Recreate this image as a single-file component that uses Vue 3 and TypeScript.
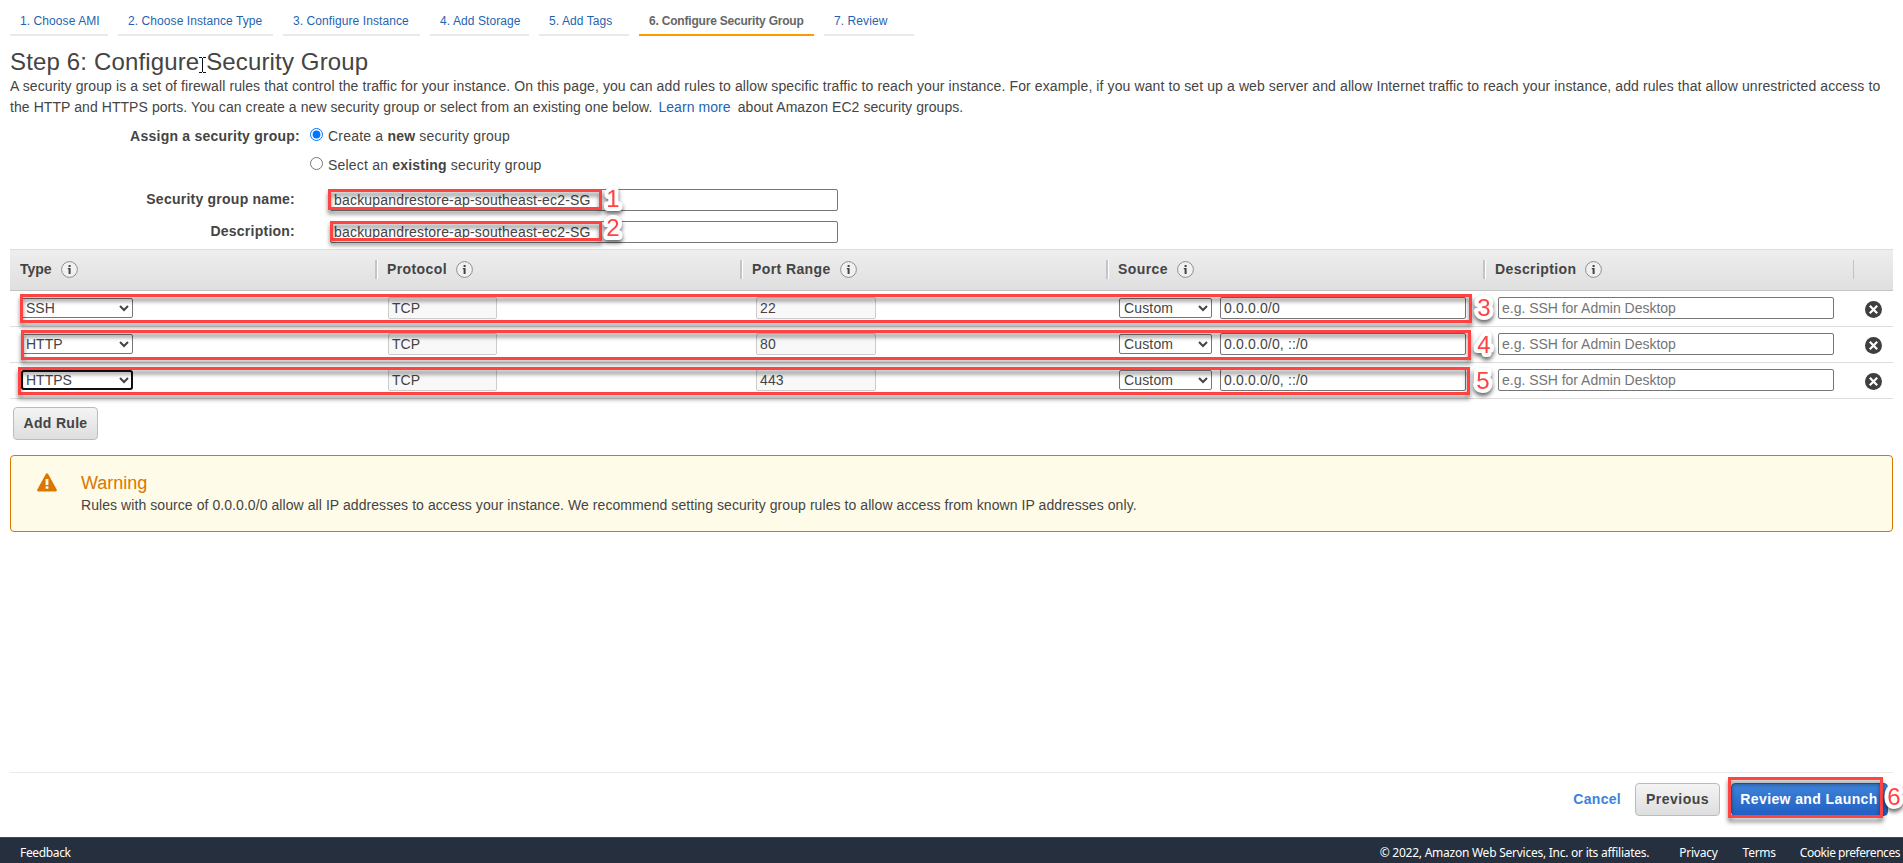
<script setup lang="ts">
import { ref } from 'vue'

interface Tab { label: string; width: number; active?: boolean }
interface Rule { type: string; port: string; source: string; focused?: boolean }
interface Column { label: string; key: string }
interface Mark { n: number; x: number; y: number; w: number; h: number; nx: number; ny: number }

const tabs: Tab[] = [
  { label: '1. Choose AMI', width: 98 },
  { label: '2. Choose Instance Type', width: 155 },
  { label: '3. Configure Instance', width: 137 },
  { label: '4. Add Storage', width: 99 },
  { label: '5. Add Tags', width: 90 },
  { label: '6. Configure Security Group', width: 175, active: true },
  { label: '7. Review', width: 90 },
]

const columns: Column[] = [
  { label: 'Type', key: 'type' },
  { label: 'Protocol', key: 'protocol' },
  { label: 'Port Range', key: 'port' },
  { label: 'Source', key: 'source' },
  { label: 'Description', key: 'desc' },
]

const rules = ref<Rule[]>([
  { type: 'SSH', port: '22', source: '0.0.0.0/0' },
  { type: 'HTTP', port: '80', source: '0.0.0.0/0, ::/0' },
  { type: 'HTTPS', port: '443', source: '0.0.0.0/0, ::/0', focused: true },
])

const groupName = ref('backupandrestore-ap-southeast-ec2-SG')
const description = ref('backupandrestore-ap-southeast-ec2-SG')
const mode = ref('new')

// Numbered callouts laid over the form
const marks: Mark[] = [
  { n: 1, x: 328, y: 189, w: 274, h: 21, nx: 613, ny: 198 },
  { n: 2, x: 330, y: 221, w: 272, h: 20, nx: 613, ny: 227 },
  { n: 3, x: 20, y: 294, w: 1452, h: 29, nx: 1484, ny: 307 },
  { n: 4, x: 21, y: 330, w: 1450, h: 30, nx: 1484, ny: 344 },
  { n: 5, x: 18, y: 367, w: 1452, h: 28, nx: 1483, ny: 380 },
  { n: 6, x: 1728, y: 777, w: 155, h: 41, nx: 1894, ny: 796 },
]
</script>

<template>
  <div class="page">
    <nav class="tabs">
      <a v-for="t in tabs" :key="t.label" class="tab" :class="{ active: t.active }" :style="{ width: t.width + 'px' }">{{ t.label }}</a>
    </nav>

    <main class="content">
      <h1>Step 6: Configure Security Group</h1>
      <p class="intro">
        <span class="line l1">A security group is a set of firewall rules that control the traffic for your instance. On this page, you can add rules to allow specific traffic to reach your instance. For example, if you want to set up a web server and allow Internet traffic to reach your instance, add rules that allow unrestricted access to</span>
        <span class="line l2">the HTTP and HTTPS ports. You can create a new security group or select from an existing one below. <a>Learn more</a> about Amazon EC2 security groups.</span>
      </p>

      <form class="form" @submit.prevent>
        <div class="row assign">
          <b class="label">Assign a security group:</b>
          <input v-model="mode" type="radio" value="new" />
          <span>Create a <b>new</b> security group</span>
        </div>
        <div class="row assign">
          <b class="label"></b>
          <input v-model="mode" type="radio" value="existing" />
          <span>Select an <b>existing</b> security group</span>
        </div>
        <div class="row field">
          <b class="label">Security group name:</b>
          <input v-model="groupName" class="box wide" />
        </div>
        <div class="row field">
          <b class="label">Description:</b>
          <input v-model="description" class="box wide" />
        </div>
      </form>

      <section class="table">
        <div class="grid head">
          <div v-for="c in columns" :key="c.key" class="th" :class="c.key">
            <span>{{ c.label }}</span>
            <svg class="info" viewBox="0 0 17 17">
              <circle cx="8.5" cy="8.5" r="7.9" fill="#f1f1f1" stroke="#8d8d8d" />
              <path d="M7.6 4h2v2h-2zM6.8 7h2.8v6h-2V8.2h-.8z" fill="#444" />
            </svg>
          </div>
          <div class="th last"></div>
        </div>
        <div v-for="r in rules" :key="r.type" class="grid rule">
          <div class="td type">
            <select :class="{ focused: r.focused }"><option>{{ r.type }}</option></select>
          </div>
          <div class="td protocol"><input class="box off" value="TCP" disabled /></div>
          <div class="td port"><input class="box off" :value="r.port" disabled /></div>
          <div class="td source">
            <select><option>Custom</option></select>
            <input v-model="r.source" class="box" />
          </div>
          <div class="td desc"><input class="box" placeholder="e.g. SSH for Admin Desktop" /></div>
          <div class="td remove">
            <svg viewBox="0 0 17 17">
              <circle cx="8.5" cy="8.5" r="8.5" fill="#3f3f3f" />
              <path d="M4.8 4.8l7.4 7.4M12.2 4.8l-7.4 7.4" stroke="#fff" stroke-width="2.2" />
            </svg>
          </div>
        </div>
      </section>

      <button class="btn add">Add Rule</button>

      <section class="warning">
        <svg class="tri" viewBox="0 0 20 19">
          <path d="M9 .8Q10-.4 11 .8L19.7 16.5Q20.3 18.4 18.6 18.5H1.4Q-.3 18.4.3 16.5Z" fill="#d97700" />
          <path d="M8.6 6h2.8v6H8.6zM8.6 13.2h2.8v2.6H8.6z" fill="#fffbe9" />
        </svg>
        <div>
          <h2>Warning</h2>
          <p>Rules with source of 0.0.0.0/0 allow all IP addresses to access your instance. We recommend setting security group rules to allow access from known IP addresses only.</p>
        </div>
      </section>
    </main>

    <div class="actions">
      <a class="cancel">Cancel</a>
      <button class="btn prev">Previous</button>
      <button class="btn primary">Review and Launch</button>
    </div>

    <footer class="footer">
      <span class="feedback">Feedback</span>
      <span class="copy">© 2022, Amazon Web Services, Inc. or its affiliates.</span>
      <span class="privacy">Privacy</span>
      <span class="terms">Terms</span>
      <span class="cookie">Cookie preferences</span>
    </footer>

    <svg class="marks" viewBox="0 0 1903 863">
      <g v-for="m in marks" :key="m.n">
        <rect class="frame" :x="m.x + 1.5" :y="m.y + 1.5" :width="m.w - 3" :height="m.h - 3" />
        <text class="num" :x="m.nx" :y="m.ny + 9">{{ m.n }}</text>
      </g>
      <path class="caret" d="M199 57.5h3M203 57.5h3M199 72.5h3M203 72.5h3M202.5 58v14" />
    </svg>
  </div>
</template>

<style>
body { margin: 0; background: #fff; overflow: hidden; }
</style>

<style scoped>
* { box-sizing: border-box; }
.page {
  position: relative;
  width: 1903px;
  height: 863px;
  overflow: hidden;
  display: flex;
  flex-direction: column;
  font: 14px/21px "Liberation Sans", Arial, sans-serif;
  color: #444;
}
.tabs { display: flex; gap: 10px; padding: 0 10px; height: 36px; flex: none; }
.tab {
  border-bottom: 2px solid #eaeaea;
  padding: 10px 0 0 10px;
  font-size: 12px;
  line-height: 22px;
  color: #1f64b1;
  white-space: nowrap;
  letter-spacing: .08px;
}
.tab.active { border-color: #f90; color: #666; font-weight: bold; letter-spacing: -.2px; }
.content { flex: 1; padding: 0 10px; }
h1 { margin: 11px 0 0; font-size: 24px; line-height: 30px; font-weight: normal; letter-spacing: .15px; }
.intro { margin: -1px 0 0; }
.line { display: block; white-space: nowrap; }
.l1 { letter-spacing: .101px; }
.l2 { letter-spacing: .07px; }
.line a { color: #1f64b1; margin: 0 3px 0 2px; }
.form { letter-spacing: .2px; }
.row { display: flex; }
.assign { height: 29px; padding-top: 8px; line-height: 21px; }
.label { text-align: right; letter-spacing: .24px; }
.assign .label { width: 290px; margin-right: 10px; }
.assign input { width: 13px; height: 13px; margin: 2px 5px 0 0; }
.field { height: 32px; }
.form .field:nth-child(3) { margin-top: 12px; }
.field .label { width: 285px; margin-right: 35px; padding-top: 1px; }
.box {
  height: 22px;
  border: 1px solid #767676;
  border-radius: 2px;
  padding: 0 3px 1px;
  background: #fff;
  color: #444;
  font: 14px "Liberation Sans", Arial, sans-serif;
  letter-spacing: .15px;
}
.box::placeholder { color: #757575; letter-spacing: -.02px; }
.wide { width: 508px; margin-top: 1px; letter-spacing: .19px; }
.off { background: #f8f8f8; border-color: #ccc; }
.table { margin-top: -3px; }
.grid { display: grid; grid-template-columns: 365px 365px 366px 377px 370px 40px; }
.head {
  height: 42px;
  border-top: 1px solid #ddd;
  border-bottom: 1px solid #c4c4c4;
  background: linear-gradient(#eee, #dfdfdf);
}
.th { display: flex; align-items: flex-start; padding: 9px 0 0 10px; font-weight: bold; position: relative; letter-spacing: .4px; line-height: 20px; }
.th.type { letter-spacing: 0; }
.th + .th { padding-left: 12px; }
.th + .th::before { content: ""; position: absolute; left: 0; top: 10px; width: 2px; height: 19px; background: #c4c4c4; border-right: 1px solid #fff; }
.th.last::before { width: 1px; border-right: 0; }
.info { width: 17px; height: 17px; margin: 2px 0 0 9px; }
.rule { height: 36px; border-bottom: 1px solid #ddd; }
.td { display: flex; padding-top: 6px; }
select {
  height: 20px;
  margin: 1px 0 0;
  padding: 0;
  border: 1px solid #767676;
  border-radius: 2px;
  background-color: #fff;
  color: #444;
  font: 14px "Liberation Sans", Arial, sans-serif;
  letter-spacing: .15px;
}
.td.type select { width: 112px; margin-left: 11px; letter-spacing: 0; }
select.focused { outline: 2px solid #101010; outline-offset: -2px; border-radius: 3px; }
.td.protocol .box { width: 109px; margin-left: 13px; padding-left: 3px; letter-spacing: 0; }
.td.port .box { width: 120px; margin-left: 16px; }
.td.source select { width: 93px; margin: 1px 8px 0 13px; }
.td.source .box { width: 246px; }
.td.desc .box { width: 336px; margin-left: 15px; }
.td.remove svg { width: 17px; height: 17px; margin: 4px 0 0 12px; }
.btn {
  height: 33px;
  border: 1px solid #bbb;
  border-radius: 4px;
  background: linear-gradient(#f4f4f4, #dedede);
  color: #444;
  font: bold 14px "Liberation Sans", Arial, sans-serif;
  letter-spacing: .5px;
  padding: 0 0 2px;
  white-space: nowrap;
}
.add { display: block; width: 85px; margin: 8px 0 0 3px; letter-spacing: .3px; }
.warning {
  display: flex;
  height: 77px;
  margin-top: 15px;
  border: 1px solid #d97700;
  border-radius: 4px;
  background: #fffbe9;
}
.tri { width: 20px; height: 19px; margin: 17px 24px 0 26px; }
h2 { margin: 16px 0 0; font-size: 18px; line-height: 22px; font-weight: normal; color: #d97700; }
.warning p { margin: 1px 0 0; white-space: nowrap; letter-spacing: .07px; }
.actions {
  flex: none;
  display: flex;
  height: 65px;
  margin: 0 10px;
  padding: 10px 5px 0 0;
  border-top: 1px solid #eaeaea;
  justify-content: flex-end;
}
.cancel { font-weight: bold; letter-spacing: .3px; color: #3b83dd; margin: 6px 14px 0 0; }
.prev { width: 85px; margin-right: 11px; }
.primary {
  width: 157px;
  padding-right: 1px;
  border-color: #2a62ad;
  background: linear-gradient(#3e84da, #2260c4);
  color: #fff;
  letter-spacing: .4px;
}
.footer {
  flex: none;
  display: flex;
  height: 26px;
  border-top: 1px solid #45484c;
  background: #252f3e;
  color: #fff;
  font: 12px/29px "Noto Sans", sans-serif;
  letter-spacing: -.25px;
  white-space: nowrap;
}
.feedback { margin: 0 auto 0 20px; letter-spacing: -.35px; }
.privacy { margin-left: 30px; }
.terms { margin-left: 25px; }
.cookie { margin: 0 3px 0 24px; letter-spacing: -.46px; }
.marks { position: absolute; inset: 0; width: 1903px; height: 863px; pointer-events: none; }
.frame { fill: none; stroke: #ff4343; stroke-width: 3; filter: drop-shadow(0 4px 2px rgba(0, 0, 0, .5)); }
.num {
  font: 24px "Liberation Sans", Arial, sans-serif;
  text-anchor: middle;
  fill: #ff4343;
  stroke: #fff;
  stroke-width: 8px;
  stroke-linejoin: round;
  paint-order: stroke;
  filter: drop-shadow(0 3px 2px rgba(0, 0, 0, .6));
}
.caret { fill: none; stroke: #111; }
</style>
